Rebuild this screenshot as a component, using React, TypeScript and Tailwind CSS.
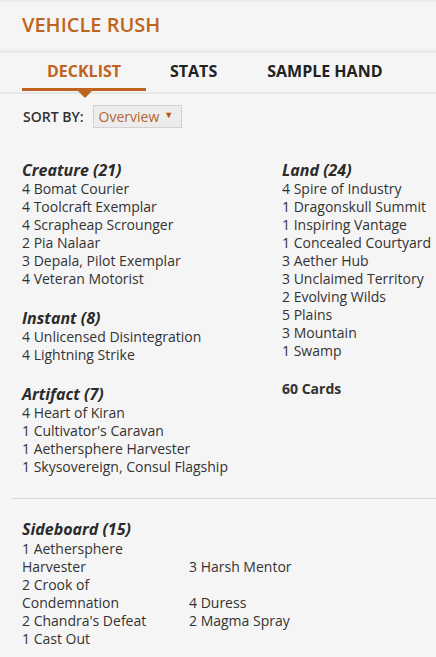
import React from "react";

const creature = ["4 Bomat Courier","4 Toolcraft Exemplar","4 Scrapheap Scrounger","2 Pia Nalaar","3 Depala, Pilot Exemplar","4 Veteran Motorist"];
const instant = ["4 Unlicensed Disintegration","4 Lightning Strike"];
const artifact = ["4 Heart of Kiran","1 Cultivator's Caravan","1 Aethersphere Harvester","1 Skysovereign, Consul Flagship"];
const land = ["4 Spire of Industry","1 Dragonskull Summit","1 Inspiring Vantage","1 Concealed Courtyard","3 Aether Hub","3 Unclaimed Territory","2 Evolving Wilds","5 Plains","3 Mountain","1 Swamp"];
const side: [string, string][] = [["1 Aethersphere Harvester","3 Harsh Mentor"],["2 Crook of Condemnation","4 Duress"],["2 Chandra's Defeat","2 Magma Spray"],["1 Cast Out",""]];

function Section({ title, items }: { title: string; items: string[] }) {
  return (
    <div className="mb-[21px]">
      <div className="-mt-[1px] text-[16px] leading-[20px] font-bold italic text-[#2b2b2b]">{title}</div>
      {items.map((i) => (
        <div key={i} className="text-[14px] leading-[18px] text-[#333]">{i}</div>
      ))}
    </div>
  );
}

export default function App() {
  return (
    <div className="w-[436px] h-[657px] overflow-hidden bg-[#f5f5f5] text-[#333]" style={{ fontFamily: '"Open Sans", sans-serif' }}>
      <div className="border-t-2 border-[#ebebeb] h-[50px] pl-[22px] pt-[9px]">
        <div className="text-[20px] leading-[28px] font-semibold text-[#bf6420]">VEHICLE RUSH</div>
      </div>
      <div className="h-[3px] bg-[#eaeaea]" />
      <div className="relative h-[41px] border-b-2 border-[#e8e8e8]">
        <div className="flex h-full items-start pt-[7px] text-[16px] leading-[22px] font-bold">
          <div className="relative w-[124px] ml-[22px] text-center text-[#bf6420]">DECKLIST</div>
          <div className="ml-[24px] text-[#222]">STATS</div>
          <div className="ml-[50px] text-[#222]">SAMPLE HAND</div>
        </div>
        <div className="absolute left-[22px] top-[35px] w-[124px] h-[3px] bg-[#bf6420]" />
        <div className="absolute left-[78px] top-[38px] w-0 h-0 border-l-[7px] border-r-[7px] border-t-[7px] border-l-transparent border-r-transparent border-t-[#bf6420]" />
      </div>
      <div className="flex items-center pl-[23px] pt-[11px]">
        <span className="text-[14px] font-semibold text-[#333]">SORT BY:</span>
        <div className="ml-[9px] flex items-center h-[23px] pl-[5px] pr-[8px] border border-[#d2d2d2] bg-[#ececec] text-[14px] text-[#b5672f]">
          Overview
          <span className="ml-[5px] -mt-[3px] text-[9px] text-[#b3550f]">▼</span>
        </div>
      </div>
      <div className="flex pl-[22px] pt-[33px]">
        <div className="w-[260px]">
          <Section title="Creature (21)" items={creature} />
          <Section title="Instant (8)" items={instant} />
          <Section title="Artifact (7)" items={artifact} />
        </div>
        <div>
          <Section title="Land (24)" items={land} />
          <div className="-mt-[1px] text-[14px] leading-[18px] font-bold text-[#333]">60 Cards</div>
        </div>
      </div>
      <div className="ml-[12px] mt-[1px] h-px bg-[#d6d6d6]" />
      <div className="pl-[22px] pt-[20px]">
        <div className="text-[16px] leading-[20px] font-bold italic text-[#2b2b2b] mb-[1px]">Sideboard (15)</div>
        <div className="grid grid-cols-[150px_1fr] gap-x-[17px] items-end">
          {side.map(([a, b]) => (
            <React.Fragment key={a}>
              <div className="text-[14px] leading-[18px]">{a}</div>
              <div className="text-[14px] leading-[18px]">{b}</div>
            </React.Fragment>
          ))}
        </div>
      </div>
    </div>
  );
}
